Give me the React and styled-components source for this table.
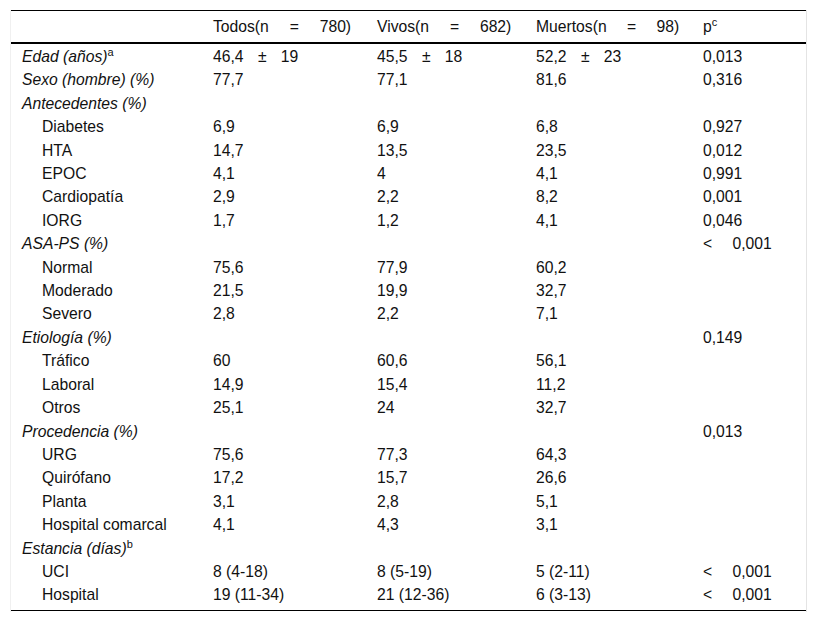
import React from "react";
import styled, { createGlobalStyle } from "styled-components";

const Global = createGlobalStyle`
  html, body { margin: 0; padding: 0; background: #fff; }
  body { font-family: "Liberation Sans", Arial, sans-serif; color: #000; }
`;

const Frame = styled.div`
  margin: 10px 10px 0 10px;
  width: 795px;
  height: 602px;
  border-left: 1px solid #f0f0f0;
  border-right: 1px solid #e4e4e4;
`;

const Table = styled.table`
  width: 795px;
  border-collapse: collapse;
  table-layout: fixed;
  font-family: "Liberation Sans", Arial, sans-serif;
  font-size: 15.7px;
  color: #111;
  margin-top: 1px;
`;

const HeadRow = styled.tr`
  border-top: 1px solid #000;
  border-bottom: 2px solid #000;
`;

const Th = styled.th`
  text-align: left;
  font-weight: normal;
  padding: 6px 11px 6px 11px;
  height: 19px;
  line-height: 19px;
  white-space: nowrap;
`;

const Body = styled.tbody`
  tr:first-child td { padding-top: 3px; }
  tr:last-child td { border-bottom: 1px solid #000; padding-bottom: 5px; }
`;

const Td = styled.td`
  padding: 2px 11px 2px ${(p) => (p.$indent ? 31 : 11)}px;
  line-height: 19.4px;
  height: 19.4px;
  white-space: nowrap;
  font-style: ${(p) => (p.$italic ? "italic" : "normal")};
  vertical-align: middle;
`;

const Spaced = styled.span`
  word-spacing: ${(p) => p.$gap}px;
`;

const Sup = styled.sup`
  font-size: 11px;
  line-height: 0;
  vertical-align: 6px;
  font-style: normal;
`;

const cols = [191, 164, 159, 167, 114];

const rows = [
  { label: "Edad (años)", sup: "a", cat: true, v: ["46,4 ± 19", "45,5 ± 18", "52,2 ± 23", "0,013"] },
  { label: "Sexo (hombre) (%)", cat: true, v: ["77,7", "77,1", "81,6", "0,316"] },
  { label: "Antecedentes (%)", cat: true, v: ["", "", "", ""] },
  { label: "Diabetes", v: ["6,9", "6,9", "6,8", "0,927"] },
  { label: "HTA", v: ["14,7", "13,5", "23,5", "0,012"] },
  { label: "EPOC", v: ["4,1", "4", "4,1", "0,991"] },
  { label: "Cardiopatía", v: ["2,9", "2,2", "8,2", "0,001"] },
  { label: "IORG", v: ["1,7", "1,2", "4,1", "0,046"] },
  { label: "ASA-PS (%)", cat: true, v: ["", "", "", "< 0,001"] },
  { label: "Normal", v: ["75,6", "77,9", "60,2", ""] },
  { label: "Moderado", v: ["21,5", "19,9", "32,7", ""] },
  { label: "Severo", v: ["2,8", "2,2", "7,1", ""] },
  { label: "Etiología (%)", cat: true, v: ["", "", "", "0,149"] },
  { label: "Tráfico", v: ["60", "60,6", "56,1", ""] },
  { label: "Laboral", v: ["14,9", "15,4", "11,2", ""] },
  { label: "Otros", v: ["25,1", "24", "32,7", ""] },
  { label: "Procedencia (%)", cat: true, v: ["", "", "", "0,013"] },
  { label: "URG", v: ["75,6", "77,3", "64,3", ""] },
  { label: "Quirófano", v: ["17,2", "15,7", "26,6", ""] },
  { label: "Planta", v: ["3,1", "2,8", "5,1", ""] },
  { label: "Hospital comarcal", v: ["4,1", "4,3", "3,1", ""] },
  { label: "Estancia (días)", sup: "b", cat: true, v: ["", "", "", ""] },
  { label: "UCI", v: ["8 (4-18)", "8 (5-19)", "5 (2-11)", "< 0,001"] },
  { label: "Hospital", v: ["19 (11-34)", "21 (12-36)", "6 (3-13)", "< 0,001"] },
];

const Value = ({ text }) => {
  if (text.includes("±")) return <Spaced $gap={10}>{text}</Spaced>;
  if (text.includes("<")) return <Spaced $gap={16}>{text}</Spaced>;
  return <>{text}</>;
};

export default function App() {
  return (
    <>
      <Global />
      <Frame>
        <Table>
          <colgroup>
            {cols.map((w, i) => (
              <col key={i} style={{ width: w }} />
            ))}
          </colgroup>
          <thead>
            <HeadRow>
              <Th />
              <Th><Spaced $gap={16.5}>Todos(n = 780)</Spaced></Th>
              <Th><Spaced $gap={16.5}>Vivos(n = 682)</Spaced></Th>
              <Th><Spaced $gap={16}>Muertos(n = 98)</Spaced></Th>
              <Th>p<Sup>c</Sup></Th>
            </HeadRow>
          </thead>
          <Body>
            {rows.map((r, i) => (
              <tr key={i}>
                <Td $italic={r.cat} $indent={!r.cat}>
                  {r.label}
                  {r.sup && <Sup>{r.sup}</Sup>}
                </Td>
                {r.v.map((t, j) => (
                  <Td key={j}>
                    <Value text={t} />
                  </Td>
                ))}
              </tr>
            ))}
          </Body>
        </Table>
      </Frame>
    </>
  );
}
